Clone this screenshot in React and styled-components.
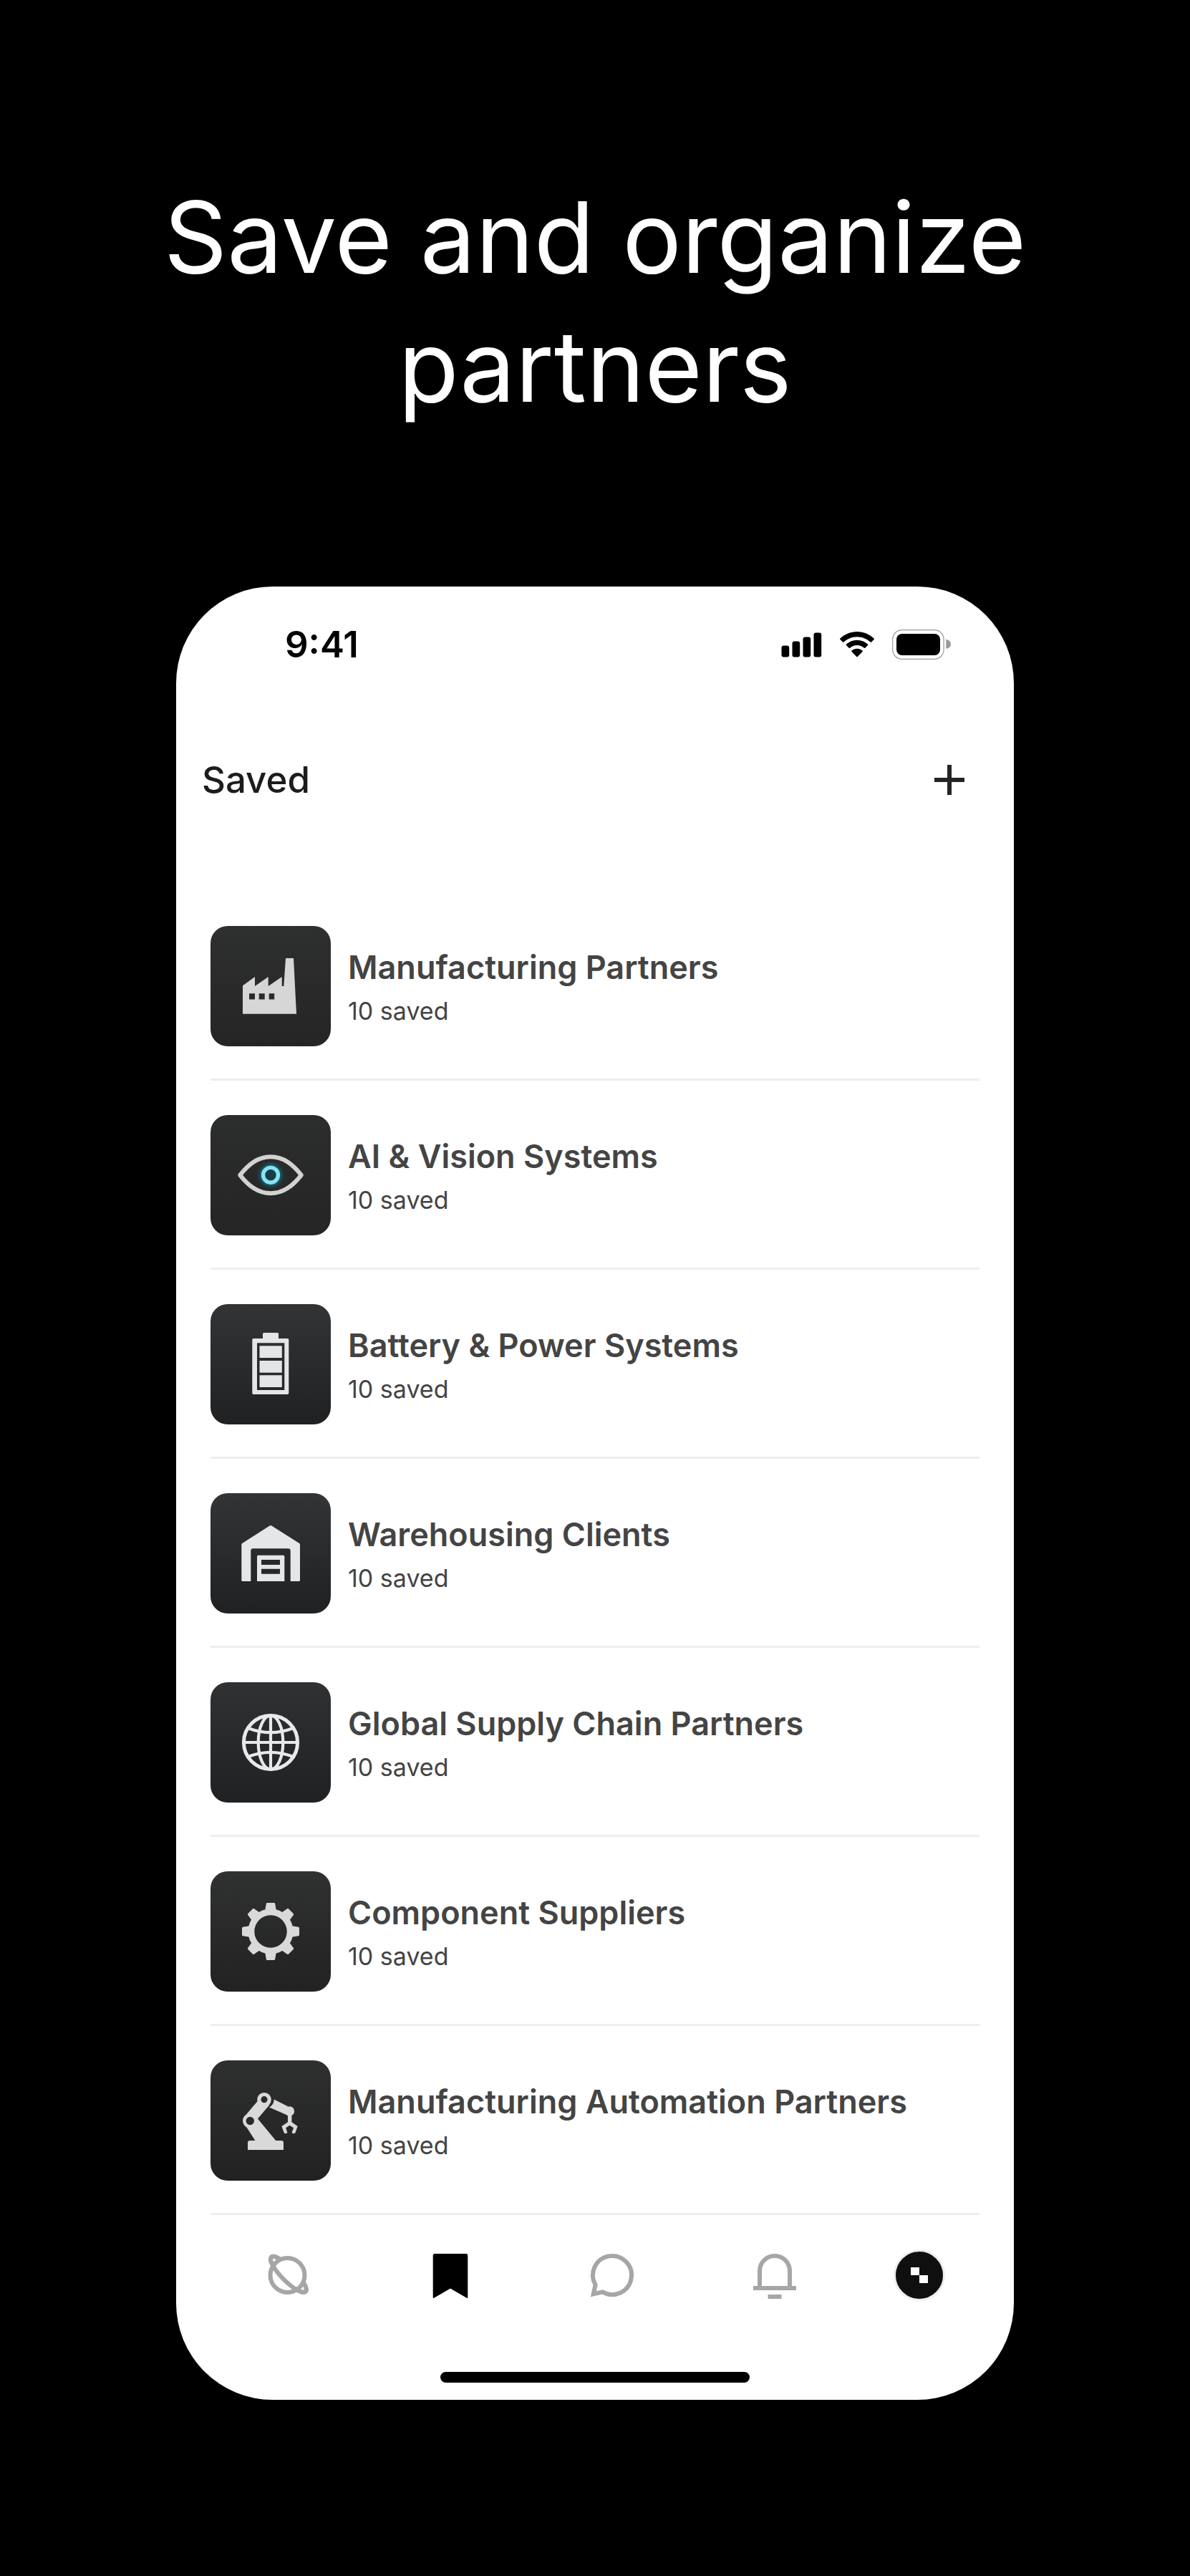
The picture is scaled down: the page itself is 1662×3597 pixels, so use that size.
import React from 'react';
import styled, { createGlobalStyle } from 'styled-components';

const GlobalStyle = createGlobalStyle`
  *, *::before, *::after { box-sizing: border-box; }
  body {
    margin: 0;
    background: #000;
    font-family: Inter, "Liberation Sans", sans-serif;
  }
`;

const Page = styled.main`
  display: flex;
  flex-direction: column;
  align-items: center;
  gap: 218px;
  min-height: 100vh;
  padding: 241px 24px 246px;
  background: #000;
`;

const Headline = styled.h1`
  max-width: 1250px;
  margin: 0;
  color: #fff;
  font-size: 138px;
  font-weight: 400;
  line-height: 180px;
  text-align: center;
`;

const Phone = styled.section`
  display: flex;
  flex-direction: column;
  width: 100%;
  max-width: 1170px;
  overflow: hidden;
  border-radius: 135px;
  background: #fff;
`;

const StatusBar = styled.div`
  display: flex;
  align-items: center;
  justify-content: space-between;
  height: 162px;
  padding: 0 88px 0 152px;
  color: #000;
`;

const Clock = styled.time`
  font-size: 51px;
  font-weight: 600;
  line-height: 60px;
`;

const StatusIcons = styled.div`
  display: flex;
  align-items: center;
  gap: 25px;

  svg { display: block; }
`;

const Header = styled.header`
  display: flex;
  align-items: center;
  justify-content: space-between;
  height: 216px;
  padding: 0 54px 0 36px;
`;

const ScreenTitle = styled.h2`
  margin: 0;
  color: #1c1c1c;
  font-size: 51px;
  font-weight: 500;
  line-height: 60px;
`;

const IconButton = styled.button`
  display: flex;
  align-items: center;
  justify-content: center;
  width: 72px;
  height: 72px;
  padding: 0;
  border: 0;
  background: none;
  color: ${(p) => p.$color};
  cursor: pointer;

  svg { display: block; }
`;

const List = styled.ul`
  margin: 0;
  padding: 48px 48px 0;
  list-style: none;
`;

const Item = styled.li`
  padding: 48px 0 45px;
  border-bottom: 3px solid #eee;
`;

const ItemLink = styled.a`
  display: flex;
  align-items: center;
  gap: 24px;
  color: #444;
  text-decoration: none;
`;

const Tile = styled.span`
  flex: none;
  width: 168px;
  height: 168px;
  overflow: hidden;
  border-radius: 24px;
  background: linear-gradient(${(p) => p.$from}, ${(p) => p.$to});
  color: ${(p) => p.$ink};

  svg { display: block; }
`;

const ItemText = styled.span`
  display: flex;
  flex-direction: column;
  gap: 6px;
`;

const ItemName = styled.span`
  font-size: 45px;
  font-weight: 600;
  line-height: 64px;
`;

const ItemCount = styled.span`
  font-size: 34px;
  line-height: 46px;
`;

const TabBar = styled.nav`
  display: grid;
  grid-template-columns: repeat(4, 1fr) 178px;
  align-items: center;
  justify-items: center;
  height: 168px;
  padding: 0 43px;
`;

const Avatar = styled.span`
  display: block;
  width: 72px;
  height: 72px;
  overflow: hidden;
  border: 3px solid #eee;
  border-radius: 50%;
  background: #0f0f0f;
`;

const HomeArea = styled.div`
  display: flex;
  justify-content: center;
  padding: 51px 0 24px;
`;

const HomeIndicator = styled.span`
  width: 432px;
  height: 15px;
  border-radius: 8px;
  background: #000;
`;

const TileSvg = ({ children }) => (
  <svg width="168" height="168" viewBox="0 0 168 168" fill="currentColor" aria-hidden="true">
    {children}
  </svg>
);

const FactoryIcon = () => (
  <TileSvg>
    <path
      fillRule="evenodd"
      d="M45 83.3 L62 71 V84 L80.7 71 V84 L99.7 71 V84 H102.3 L105 45 H116 L120 122.7 H45Z
         M54 94.3 V102.6 H62 V94.3Z M67.7 94.3 V102.6 H75.7 V94.3Z M81.7 94.3 V102.6 H89.2 V94.3Z"
    />
  </TileSvg>
);

const EyeIcon = () => (
  <TileSvg>
    <defs>
      <filter id="iris-glow" x="-100%" y="-100%" width="300%" height="300%">
        <feGaussianBlur stdDeviation="3" />
      </filter>
    </defs>
    <path
      d="M41.2 83.8 C53 69 66 58.3 84 58.3 S115 69 126.8 83.8 C115 98.6 102 109.3 84 109.3 S53 98.6 41.2 83.8Z"
      fill="none"
      stroke="currentColor"
      strokeWidth="6"
      strokeLinejoin="round"
    />
    <circle cx="84" cy="83.8" r="10.5" fill="#0b4a58" stroke="#0892ad" strokeWidth="7" filter="url(#iris-glow)" />
    <circle cx="84" cy="83.8" r="10.4" fill="#173d46" stroke="#86e4f4" strokeWidth="5.4" />
  </TileSvg>
);

const BatteryIcon = () => (
  <TileSvg>
    <rect x="73" y="40" width="22" height="12" rx="1.5" />
    <path
      fillRule="evenodd"
      d="M60 48 H107.5 A1.7 1.7 0 0 1 109.3 49.7 V124.3 A1.7 1.7 0 0 1 107.5 126 H60 A1.7 1.7 0 0 1 58.3 124.3 V49.7 A1.7 1.7 0 0 1 60 48Z
         M65 54.3 V120 H103.3 V54.3Z"
    />
    <rect x="68.5" y="58.3" width="31.3" height="16.7" />
    <rect x="68.5" y="79" width="31.3" height="16.7" />
    <rect x="68.5" y="99.3" width="31.3" height="16.7" />
  </TileSvg>
);

const WarehouseIcon = () => (
  <TileSvg>
    <path d="M82.6 45.6 Q84 44.6 85.4 45.6 L124 70 Q125 70.7 125 72 V121.5 Q125 123 123.5 123 H111.7 V80.5 Q111.7 77.3 108.5 77.3 H59.5 Q56.3 77.3 56.3 80.5 V123 H44.8 Q43.3 123 43.3 121.5 V72 Q43.3 70.7 44.3 70Z" />
    <path
      fillRule="evenodd"
      d="M66.5 86.7 H101.8 Q103.3 86.7 103.3 88.2 V123 H65 V88.2 Q65 86.7 66.5 86.7Z
         M71 93 V100 H97 V93Z M71 105.7 V112.7 H97 V105.7Z"
    />
  </TileSvg>
);

const GlobeIcon = () => (
  <TileSvg>
    <g fill="none" stroke="currentColor" strokeWidth="4.2">
      <circle cx="84" cy="84" r="37.6" strokeWidth="5" />
      <ellipse cx="84" cy="84" rx="17.3" ry="37.6" />
      <path d="M84 46 V122 M46 84 H122" />
      <path d="M53 64.2 Q84 76 115 64.2 M53 103.8 Q84 92 115 103.8" />
    </g>
  </TileSvg>
);

const GearIcon = () => (
  <TileSvg>
    <circle cx="84" cy="84" r="27.1" fill="none" stroke="currentColor" strokeWidth="8.8" />
    {[0, 45, 90, 135, 180, 225, 270, 315].map((angle) => (
      <path
        key={angle}
        transform={`rotate(${angle} 84 84)`}
        d="M76 56 L77.8 45.2 Q78 44 79.2 44 H88.8 Q90 44 90.2 45.2 L92 56Z"
      />
    ))}
  </TileSvg>
);

const RobotIcon = () => (
  <TileSvg>
    <path d="M55 112 H99 Q102 112 102 115 V125 H52 V115 Q52 112 55 112Z" />
    <path d="M50.5 93.5 L63 113 H92 L65.5 81 L60 78Z" />
    <path d="M66.5 56 L46.5 79.5 L65.5 82 L82.5 62 L75 50Z" />
    <circle cx="55.3" cy="84.5" r="10.3" />
    <circle cx="75" cy="54.7" r="9.8" />
    <circle cx="55.3" cy="84.5" r="5.7" fill="#282a29" />
    <circle cx="75" cy="54.7" r="4.6" fill="#292b2a" />
    <path d="M88.8 54.5 L108 64.3 L106 76 L82 65.6 Q88.5 62 88.8 54.5Z" />
    <circle cx="110.3" cy="71" r="6.8" />
    <path d="M108 75 H113.4 V86.3 L121.7 92 L118.3 101.4 L115.6 102.2 L113.6 101 L116 94.3 L110.5 90.7 L105.3 94.3 L107.4 101 L105.4 102.2 L102.8 101.4 L99.4 92 L108 86.3Z" />
  </TileSvg>
);

const TabSvg = ({ children }) => (
  <svg width="72" height="72" viewBox="0 0 72 72" fill="none" stroke="currentColor" strokeWidth="6" aria-hidden="true">
    {children}
  </svg>
);

const PlanetIcon = () => (
  <TabSvg>
    <g transform="rotate(45 36.8 34.8)">
      <ellipse cx="36.8" cy="34.8" rx="34" ry="9.5" />
    </g>
    <circle cx="35.5" cy="36" r="22" fill="#fff" stroke="none" />
    <circle cx="35.5" cy="36" r="24" />
    <g transform="rotate(45 36.8 34.8)">
      <path d="M2.8 34.8 A34 9.5 0 0 0 70.8 34.8" />
      <path d="M2.8 34.8 A34 9.5 0 0 1 10 28.9 M70.8 34.8 A34 9.5 0 0 0 63.6 28.9" />
    </g>
  </TabSvg>
);

const BookmarkIcon = () => (
  <TabSvg>
    <path
      fill="currentColor"
      stroke="none"
      d="M14 6 H58 A2.3 2.3 0 0 1 60.3 8.3 V66.5 Q60.3 69 58.4 67.6 L36 54.6 L13.6 67.6 Q11.7 69 11.7 66.5 V8.3 A2.3 2.3 0 0 1 14 6Z"
    />
  </TabSvg>
);

const ChatIcon = () => (
  <TabSvg>
    <path d="M9.8 62.2 L12.6 49.5 A27 27 0 1 1 22.5 59.4Z" strokeMiterlimit="8" />
  </TabSvg>
);

const BellIcon = () => (
  <TabSvg>
    <path d="M15 54 V30 A21 21 0 0 1 57 30 V54 M6 54 H66 M26.5 66 H45.5" />
  </TabSvg>
);

const PlusIcon = () => (
  <svg width="72" height="72" viewBox="0 0 72 72" stroke="currentColor" strokeWidth="6" aria-hidden="true">
    <path d="M36 15 V57 M15 36 H57" />
  </svg>
);

const SignalIcon = () => (
  <svg width="57" height="35" viewBox="0 0 57 35" aria-hidden="true">
    <rect x="0.5" y="18.5" width="10.7" height="16" rx="3" />
    <rect x="15.5" y="12.5" width="10.7" height="22" rx="3" />
    <rect x="30.5" y="6.5" width="10.7" height="28" rx="3" />
    <rect x="45.5" y="0.5" width="10.7" height="34" rx="3" />
  </svg>
);

const WifiIcon = () => (
  <svg width="48" height="36" viewBox="0 0 48 36" aria-hidden="true">
    <path d="M24 0 C33 0 41.5 3.5 47.6 9.6 Q48.3 10.3 47.6 11 L44 14.6 Q43.4 15.2 42.7 14.5 C37.5 10 31 7.2 24 7.2 S10.5 10 5.3 14.5 Q4.6 15.2 4 14.6 L.4 11 Q-.3 10.3 .4 9.6 C6.5 3.5 15 0 24 0Z" />
    <path d="M24 11.8 C29.8 11.8 35 14 39 17.6 Q39.7 18.3 39 19 L35.3 22.7 Q34.6 23.3 33.9 22.7 C31.2 20.4 28 19 24 19 S16.8 20.4 14.1 22.7 Q13.4 23.3 12.7 22.7 L9 19 Q8.3 18.3 9 17.6 C13 14 18.2 11.8 24 11.8Z" />
    <path d="M24 23.8 C27 23.8 29.6 25 31.5 26.6 Q32.2 27.3 31.5 28 L24.7 34.9 Q24 35.6 23.3 34.9 L16.5 28 Q15.8 27.3 16.5 26.6 C18.4 25 21 23.8 24 23.8Z" />
  </svg>
);

const ChargeIcon = () => (
  <svg width="82" height="42" viewBox="0 0 82 42" aria-hidden="true">
    <rect x="0.7" y="0.7" width="71.4" height="40.6" rx="13" fill="none" stroke="#999" strokeWidth="1.2" />
    <rect x="6" y="6" width="61" height="30" rx="8" />
    <path d="M75.3 13.5 Q82 15.5 82 20.5 T75.3 27Z" fill="#999" />
  </svg>
);

const collections = [
  { name: 'Manufacturing Partners', icon: FactoryIcon, from: '#2e2f2f', to: '#252525', ink: '#d6d6d6' },
  { name: 'AI & Vision Systems', icon: EyeIcon, from: '#2c2d2d', to: '#252525', ink: '#d2d2d2' },
  { name: 'Battery & Power Systems', icon: BatteryIcon, from: '#323436', to: '#202123', ink: '#e4e5e8' },
  { name: 'Warehousing Clients', icon: WarehouseIcon, from: '#323436', to: '#202123', ink: '#e5e6e8' },
  { name: 'Global Supply Chain Partners', icon: GlobeIcon, from: '#303133', to: '#202123', ink: '#e8e9ea' },
  { name: 'Component Suppliers', icon: GearIcon, from: '#303131', to: '#212221', ink: '#d9d9d9' },
  { name: 'Manufacturing Automation Partners', icon: RobotIcon, from: '#2e2f2f', to: '#212221', ink: '#d9d9d9' },
];

const tabs = [
  { label: 'Discover', icon: PlanetIcon, color: '#a6a6a6' },
  { label: 'Saved', icon: BookmarkIcon, color: '#000', current: true },
  { label: 'Messages', icon: ChatIcon, color: '#a6a6a6' },
  { label: 'Notifications', icon: BellIcon, color: '#a6a6a6' },
];

export default function App() {
  return (
    <>
      <GlobalStyle />
      <Page>
        <Headline>Save and organize partners</Headline>
        <Phone>
          <StatusBar>
            <Clock>9:41</Clock>
            <StatusIcons>
              <SignalIcon />
              <WifiIcon />
              <ChargeIcon />
            </StatusIcons>
          </StatusBar>
          <Header>
            <ScreenTitle>Saved</ScreenTitle>
            <IconButton type="button" aria-label="New collection" $color="#242424">
              <PlusIcon />
            </IconButton>
          </Header>
          <List>
            {collections.map(({ name, icon: Icon, from, to, ink }) => (
              <Item key={name}>
                <ItemLink href="#">
                  <Tile $from={from} $to={to} $ink={ink}>
                    <Icon />
                  </Tile>
                  <ItemText>
                    <ItemName>{name}</ItemName>
                    <ItemCount>10 saved</ItemCount>
                  </ItemText>
                </ItemLink>
              </Item>
            ))}
          </List>
          <TabBar aria-label="Main">
            {tabs.map(({ label, icon: Icon, color, current }) => (
              <IconButton
                key={label}
                type="button"
                aria-label={label}
                aria-current={current ? 'page' : undefined}
                $color={color}
              >
                <Icon />
              </IconButton>
            ))}
            <IconButton type="button" aria-label="Profile" $color="#fff">
              <Avatar>
                <svg width="66" height="66" viewBox="0 0 66 66" fill="currentColor" aria-hidden="true">
                  <path d="M21 22 H33 V33 H45 V44 H33 V33 H21Z" />
                </svg>
              </Avatar>
            </IconButton>
          </TabBar>
          <HomeArea>
            <HomeIndicator />
          </HomeArea>
        </Phone>
      </Page>
    </>
  );
}
